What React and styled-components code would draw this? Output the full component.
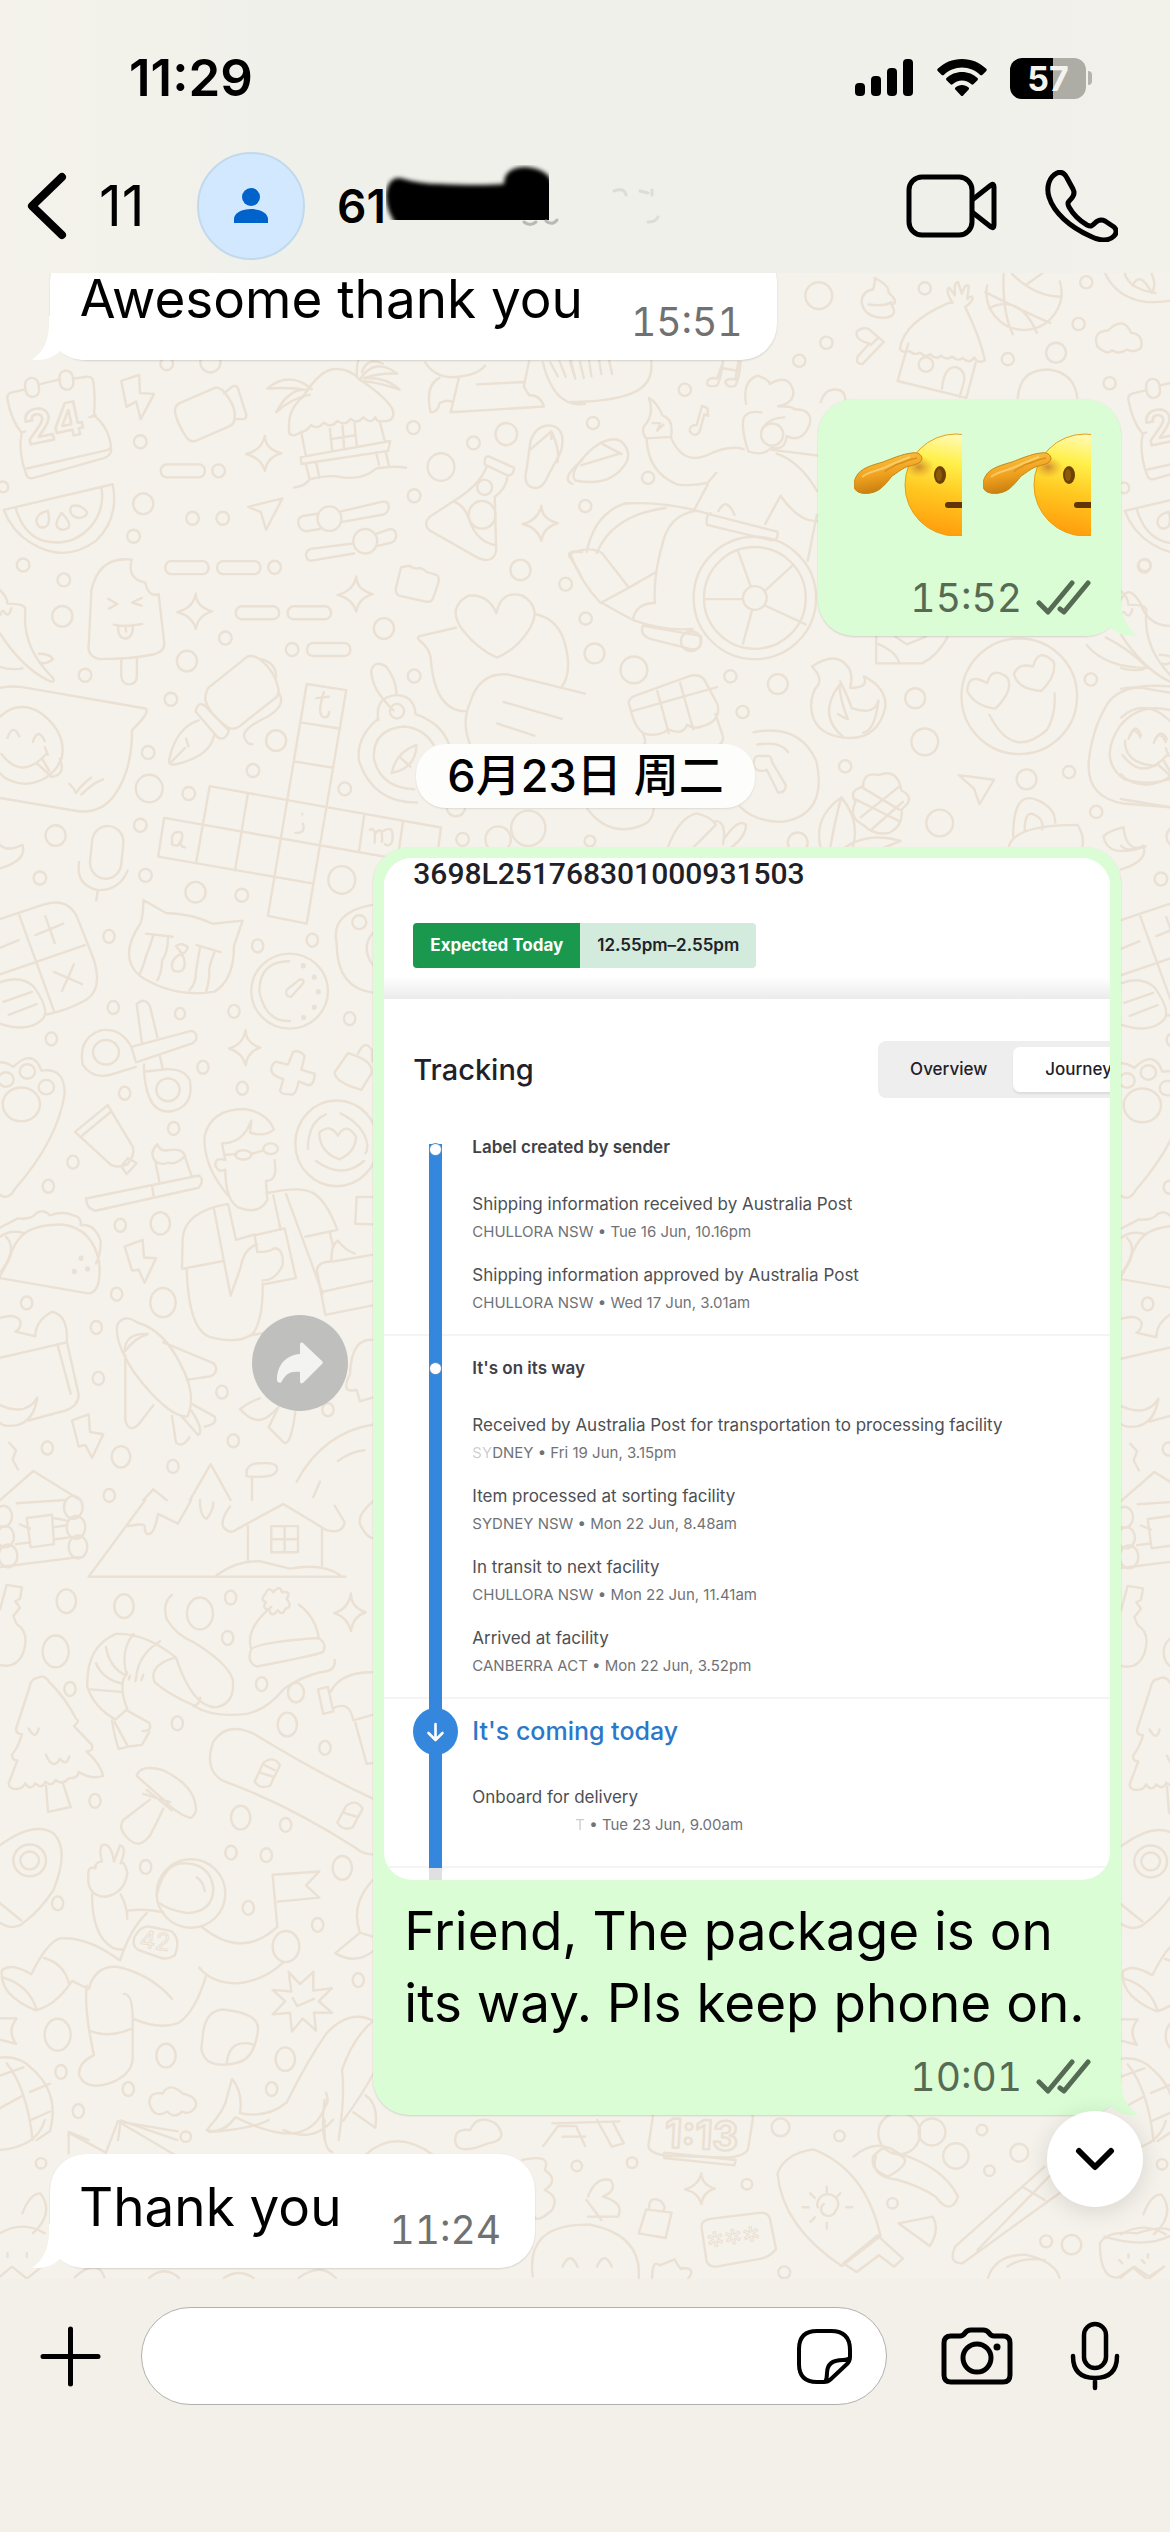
import React, { useId } from "react";
import styled, { createGlobalStyle } from "styled-components";

const GlobalStyle = createGlobalStyle`
  * {
    box-sizing: border-box;
  }

  body {
    margin: 0;
    background: #f2f0e9;
    color: #000;
    font-family: Inter, "Noto Sans CJK SC", sans-serif;
  }

  button {
    border: 0;
    padding: 0;
    background: none;
    color: inherit;
    font: inherit;
    cursor: pointer;
  }

  svg {
    display: block;
    flex: none;
  }
`;

const Page = styled.div`
  display: flex;
  flex-direction: column;
  min-height: 100vh;
`;

/* ---------- header ---------- */

const Header = styled.header`
  display: flex;
  flex-direction: column;
  gap: 44px;
  padding: 48px 0 13px;
  background: linear-gradient(90deg, #f4f2eb 0%, #eff0ea 30%, #eff0ea 70%, #f2f1ea 100%);
`;

const StatusBar = styled.div`
  display: flex;
  align-items: center;
  justify-content: space-between;
  height: 60px;
  padding: 0 78px 0 129px;
`;

const Clock = styled.div`
  font-size: 51px;
  line-height: 60px;
  font-weight: 600;
`;

const StatusIcons = styled.div`
  display: flex;
  align-items: center;
  gap: 23px;
`;

const Battery = styled.div`
  display: flex;
  align-items: center;
  gap: 2px;
`;

const BatteryBody = styled.div`
  width: 76px;
  height: 41px;
  border-radius: 12px;
  background: linear-gradient(90deg, #000 57%, #adada6 57%);
  color: #f4f3ee;
  font-size: 34px;
  line-height: 41px;
  font-weight: 700;
  text-align: center;
`;

const BatteryCap = styled.div`
  width: 4px;
  height: 14px;
  border-radius: 0 4px 4px 0;
  background: #b4b4ad;
`;

const NavBar = styled.nav`
  display: flex;
  align-items: center;
  height: 108px;
  padding: 0 52px 0 26px;
`;

const BackButton = styled.button`
  display: flex;
  align-items: center;
  gap: 31px;
  width: 171px;
  font-size: 56px;
  line-height: 64px;
`;

const Avatar = styled.div`
  display: flex;
  align-items: center;
  justify-content: center;
  width: 108px;
  height: 108px;
  border: 2px solid #c2d9ec;
  border-radius: 50%;
  background: #d1e8ff;
`;

const Contact = styled.div`
  display: flex;
  align-items: center;
  flex: 1;
  margin-left: 32px;
  font-size: 46px;
  line-height: 56px;
  font-weight: 600;
`;

const NavActions = styled.div`
  display: flex;
  align-items: center;
  gap: 48px;
`;

/* ---------- conversation ---------- */

const Chat = styled.main`
  position: relative;
  flex: 1;
  overflow: hidden;
  background: #f5f2eb;
`;

const Wallpaper = styled.svg`
  position: absolute;
  top: 0;
  left: 0;
  width: 100%;
  height: 100%;
  fill: none;
  stroke: #eae0d3;
  stroke-width: 2.4;
  stroke-linecap: round;
  stroke-linejoin: round;

  path,
  circle,
  ellipse,
  rect {
    vector-effect: non-scaling-stroke;
  }
`;

const Messages = styled.div`
  position: relative;
  display: flex;
  flex-direction: column;
  gap: 39px;
  margin-top: -27px;
  padding: 0 49px 10px 50px;
`;

const Row = styled.div`
  display: flex;
  justify-content: ${(props) => (props.$mine ? "flex-end" : "flex-start")};
  gap: 25px;
`;

const Bubble = styled.div`
  position: relative;
  border-radius: 36px;
  background: ${(props) => (props.$mine ? "#dafdd5" : "#fff")};
  box-shadow: 0 1px 2px rgba(0, 0, 0, 0.14);
`;

const TextBubble = styled(Bubble)`
  display: flex;
  align-items: flex-end;
  gap: 48px;
  padding: 17px 34px 14px 29px;
`;

const EmojiBubble = styled(Bubble)`
  padding: 34px 30px 14px 36px;
`;

const MediaBubble = styled(Bubble)`
  width: calc(70% - 2px);
  padding: 11px;
`;

const Tail = styled.svg`
  position: absolute;
  bottom: 0;
  ${(props) => (props.$mine ? "right: -17px;" : "left: -18px; transform: scaleX(-1);")}
`;

const Text = styled.p`
  margin: 0;
  font-size: 53px;
  line-height: 72px;
`;

const ShortText = styled(Text)`
  padding-bottom: 11px;
`;

const Caption = styled.div`
  padding: 15px 0 3px 20px;
`;

const Meta = styled.div`
  display: flex;
  align-items: center;
  justify-content: flex-end;
  gap: 14px;
  color: ${(props) => (props.$mine ? "#566b53" : "#717171")};
  font-size: 39px;
  line-height: 48px;
  font-variant-numeric: tabular-nums;
`;

const CaptionMeta = styled(Meta)`
  margin-top: 14px;
  padding-right: 19px;
`;

const Emojis = styled.div`
  display: flex;
  gap: 21px;
  margin-bottom: 38px;
`;

const DatePill = styled.div`
  align-self: center;
  margin-top: 69px;
  padding: 0 31px;
  border-radius: 30px;
  background: #fdfdfc;
  box-shadow: 0 1px 2px rgba(0, 0, 0, 0.1);
  font-size: 45px;
  line-height: 64px;
  font-weight: 500;
`;

const ForwardButton = styled.button`
  display: flex;
  align-items: center;
  justify-content: center;
  align-self: center;
  flex: none;
  width: 96px;
  height: 96px;
  margin-bottom: 236px;
  border-radius: 50%;
  background: #bfbfbe;
`;

const ScrollButton = styled.button`
  position: absolute;
  right: 27px;
  bottom: 72px;
  display: flex;
  align-items: center;
  justify-content: center;
  width: 96px;
  height: 96px;
  border-radius: 50%;
  background: #fff;
  box-shadow: 0 4px 24px rgba(0, 0, 0, 0.12);
`;

/* ---------- parcel tracking card ---------- */

const Card = styled.section`
  height: 1022px;
  overflow: hidden;
  border-radius: 28px;
  background: #fff;
  color: #1f2128;
`;

const CardTop = styled.div`
  display: flex;
  flex-direction: column;
  gap: 33px;
  height: 141px;
  padding-left: 29px;
  background: linear-gradient(#fff 84%, #ebebec 100%);
`;

const ParcelNumber = styled.div`
  font-family: Roboto, sans-serif;
  font-size: 30px;
  line-height: 32px;
  font-weight: 500;
`;

const Estimate = styled.div`
  display: flex;
  font-size: 17px;
  line-height: 45px;
`;

const EstimateLabel = styled.div`
  padding: 0 17px;
  border-radius: 4px 0 0 4px;
  background: #1a984e;
  color: #fff;
  font-weight: 700;
`;

const EstimateTime = styled.div`
  padding: 0 17px;
  border-radius: 0 4px 4px 0;
  background: #d2ebdd;
  font-weight: 600;
`;

const CardHead = styled.div`
  display: flex;
  align-items: center;
  justify-content: space-between;
  padding: 42px 0 37px 29px;
`;

const CardTitle = styled.h2`
  margin: 0;
  font-size: 29px;
  line-height: 36px;
  font-weight: 500;
`;

const Tabs = styled.div`
  display: flex;
  flex: none;
  margin-right: -40px;
  padding: 6px;
  border-radius: 8px;
  background: #eee;
`;

const Tab = styled.button`
  height: 45px;
  padding: 0 26px;
  border-radius: 7px;
  background: ${(props) => (props.$selected ? "#fff" : "none")};
  box-shadow: ${(props) => (props.$selected ? "0 2px 2px rgba(0, 0, 0, 0.08)" : "none")};
  font-size: 17px;
  line-height: 45px;
  font-weight: 500;
`;

const SelectedTab = styled(Tab)`
  padding: 0 32px;
`;

const Journey = styled.ol`
  margin: 0;
  padding: 0;
  list-style: none;
`;

const Stage = styled.li`
  display: flex;
  border-bottom: 2px solid #f4f4f5;
`;

const Rail = styled.div`
  display: flex;
  justify-content: center;
  align-items: flex-start;
  flex: none;
  width: 45px;
  margin: ${(props) => (props.$first ? "9px" : "0")} 14px -2px 29px;
  padding-top: ${(props) => props.$top}px;
  background: linear-gradient(#3487dc, #3487dc) center / 13px 100% no-repeat;
`;

const Dot = styled.div`
  width: 11px;
  height: 11px;
  border-radius: 50%;
  background: #fff;
  box-shadow: 0 0 0 1px #5b93c9;
`;

const ArrowDot = styled.div`
  display: flex;
  align-items: center;
  justify-content: center;
  width: 45px;
  height: 47px;
  border-radius: 50%;
  background: #3487dc;
`;

const StageBody = styled.div`
  padding-top: ${(props) => props.$top}px;
  padding-bottom: ${(props) => (props.$current ? "29px" : "19px")};
`;

const StageTitle = styled.h3`
  margin: 0 0 ${(props) => (props.$current ? "38px" : "33px")};
  color: ${(props) => (props.$current ? "#2a78ca" : "#3f4146")};
  font-size: ${(props) => (props.$current ? "25px" : "17px")};
  line-height: ${(props) => (props.$current ? "32px" : "24px")};
  font-weight: ${(props) => (props.$current ? 500 : 600)};
`;

const Scan = styled.div`
  color: #4d4f53;
  font-size: 17px;
  line-height: 24px;

  & + & {
    margin-top: 19px;
  }
`;

const ScanPlace = styled.div`
  margin-top: 4px;
  color: #707276;
  font-size: 15px;
  line-height: 24px;
`;

const Faded = styled.span`
  opacity: 0.35;
`;

const Blank = styled.span`
  display: inline-block;
  width: 103px;
`;

const RailEnd = styled.div`
  width: 13px;
  height: 16px;
  margin-left: 45px;
  background: #e0e0e2;
`;

/* ---------- composer ---------- */

const Composer = styled.footer`
  display: flex;
  align-items: flex-start;
  height: 253px;
  padding: 28px 50px 0 40px;
  background: #f2f0e9;
`;

const ComposerButton = styled.button`
  display: flex;
  align-items: center;
  flex: none;
  height: 98px;
  margin-right: ${(props) => props.$gap || 0}px;
`;

const Field = styled.div`
  display: flex;
  align-items: center;
  flex: 1;
  min-width: 0;
  height: 98px;
  margin-right: 54px;
  padding: 0 34px;
  border: 1px solid #b1b0ac;
  border-radius: 49px;
  background: #fff;
`;

const Input = styled.input`
  flex: 1;
  min-width: 0;
  border: 0;
  outline: 0;
  background: none;
  font-family: inherit;
  font-size: 50px;
`;

const stages = [
  {
    title: "Label created by sender",
    top: 0,
    railTop: 0,
    scans: [
      { what: "Shipping information received by Australia Post", where: "CHULLORA NSW • Tue 16 Jun, 10.16pm" },
      { what: "Shipping information approved by Australia Post", where: "CHULLORA NSW • Wed 17 Jun, 3.01am" },
    ],
  },
  {
    title: "It's on its way",
    top: 20,
    railTop: 27,
    scans: [
      { what: "Received by Australia Post for transportation to processing facility", faded: "SY", where: "DNEY • Fri 19 Jun, 3.15pm" },
      { what: "Item processed at sorting facility", where: "SYDNEY NSW • Mon 22 Jun, 8.48am" },
      { what: "In transit to next facility", where: "CHULLORA NSW • Mon 22 Jun, 11.41am" },
      { what: "Arrived at facility", where: "CANBERRA ACT • Mon 22 Jun, 3.52pm" },
    ],
  },
  {
    title: "It's coming today",
    top: 16,
    railTop: 9,
    current: true,
    scans: [{ what: "Onboard for delivery", blank: true, faded: "T", where: " • Tue 23 Jun, 9.00am" }],
  },
];

const Dots = ({ items }) => items.map(([x, y, r]) => <circle key={`${x}-${y}`} cx={x} cy={y} r={r} />);

const Sparkle = ({ x, y }) => (
  <path d={`M${x + 5} ${y - 46}q0 34 44 46q-38 10-44 46q-10-34-50-44q42-10 50-48z`} />
);

const CalendarDay = () => (
  <text x="28" y="172" fontSize="46" fontWeight="700" fontFamily="Inter, sans-serif" transform="rotate(-12 28 172)">24</text>
);

const DoodleLabels = () => (
  <g fontFamily="Inter, sans-serif">
    <text x="139" y="1674" fontSize="24" strokeWidth="1" transform="rotate(8 139 1674)">42</text>
    <text x="664" y="1874" fontSize="40" fontWeight="700" transform="rotate(3 664 1874)">1:13</text>
    <text x="709" y="1986" fontSize="36" strokeWidth="1" transform="rotate(-8 709 1986)">***</text>
  </g>
);

// everything in one tile of the wallpaper, which repeats sideways
const Doodles = () => (
  <>
    <g transform="translate(0 57) scale(0.3731 0.3827)">
      <path d="M67 155l-35 8q-15 4-12 18q10 55 38 88q-10 50 12 108q4 12 18 10l190-52q20-6 20-24q-4-55-46-88q4-50-2-88q-2-14-18-13l-34 5M105 142l55-13M58 268l10-3M240 228l16-5M72 362l215-48q12-4 10-16" />
      <rect x="68" y="125" width="36" height="50" rx="18" transform="rotate(-8 86 150)" />
      <rect x="160" y="106" width="36" height="50" rx="18" transform="rotate(-8 178 131)" />
      <path d="M10 470L302 403q18 90-45 148q-85 60-175 5q-50-30-72-86zM42 465q20 68 72 85q75 20 128-35q40-45 30-103" />
      <path d="M128 472q-34 10-30 30q4 16 20 14q20-6 10-44zM165 478q-18 24-12 36q8 12 24 6q22-8-12-42zM192 460q-8 14 2 24q16 12 30 4q20-10-4-24q-10-8-28-4z" />
      <path d="M325 133l48-16l2 48l38 2l-36 66l-12-46l-26 14zM472 225q-10-28 14-36l90-38q12-2 22 8q38 42 30 75q0 12-14 18l-90 38q-16 4-26-12q-20-30-26-53zM600 165l24-18q10-4 14 6l22 68q2 10-8 12l-22 0" />
      <rect x="431" y="351" width="118" height="34" rx="16" />
      <rect x="443" y="604" width="116" height="34" rx="16" />
      <rect x="582" y="604" width="116" height="34" rx="16" />
      <rect x="632" y="722" width="116" height="34" rx="16" />
      <rect x="771" y="722" width="116" height="34" rx="16" />
      <rect x="823" y="818" width="116" height="34" rx="16" />
      <path d="M776 272q-10-60 36-98q50-76 90-72q36 0 60 26q86 56 92 86q4 24-26 24q-18 4-22-10q-12 20-32 0q-16 20-34 4q-14 20-36 6q-16 20-36 4q-18 20-34 6q-14 18-26 18q-20 14-32 6zM806 332l240-42l-6 26l-232 34zM808 270l12 60M1018 240l14 52M884 258l6 54M950 244l6 56M886 285l66-10M918 250l4 56M820 352l10 38M848 348l8 38M1008 320l8 32M1034 318l8 36M788 412q30-4 42-22q60-14 92-4q54 4 86-24q44-8 80-2" />
      <path d="M836 155q-60-50-120-2q60-4 110 4q-50-8-86 58q36-34 90-46M965 128q40-58 100-14q-50-2-90 12q60-4 96 30q-50-18-96-22M956 120q0-60 20-48M970 110q14-40 56-22" />
      <path d="M665 462l92-22l-44 82l-14-46z" />
      <path d="M850 480l-38 6q-16 6-12 22q6 18 22 18l35-6M914 474l114-26q14 0 14 14q0 14-14 20l-114 20M945 558l-112 14q-16 6-12 20q4 14 18 10l110-18M1010 532l36-12q14 0 16 16q0 14-14 20l-36 8" />
      <circle cx="883" cy="493" r="32" />
      <circle cx="979" cy="552" r="32" />
      <path d="M1310 330q-14 0-10 22l60 28q18 0 18-20zM1304 358q-20 50-90 90l-62 40q-20 18 0 36l130 72q40 16 48-20l-4-140q30-20 34-52M1215 448q30 10 42 46q20 60 72 68" />
      <circle cx="1299" cy="411" r="20" />
      <circle cx="1292" cy="483" r="36" />
      <path d="M1422 290q16-44 56-40q40 8 26 66q-10 20-36 66q-16 40-46 28q-20-10-10-50zM1418 315l60-50q24 50 16 80M1478 265l0 20" />
      <path d="M1560 340q-60 50-26 62M1560 580q-50-6-28 20q20 30 28 50" />
      <path d="M1075 620l22-4q12 10 30 6q14 6 16 10l26 8q10 4 6 20l-14 40q-4 12-18 10l-74-16q-10-6-8-20z" />
      <path d="M245 680q20-90 108-80q-14 50 36 60q10 40 36 30l15 126q4 24-30 32q-60 12-144 12q-34-8-28-40zM325 862l0 44q4 20 20 20q22 0 22-24l0-42M290 702l24 14l-22 12M380 700l-26 12l26 8M305 770q30 8 76-2M316 772q0 36 22 34q20-4 18-36M336 772l2 16" />
      <path d="M0 680q20 18 20 35q50 0 48 16q-10 100 74 178q8 16-14 6q-70-34-128-122M0 745q8-20 14-4q12 8 16-14M104 846q30 0 38 14q-20 16-36 8M0 880q26 10 60 4" />
      <path d="M0 935q30-6 60-2l330 56q14 10-36 56q0 110-50 174q-40 50-110 36l-194-32" />
      <path d="M0 1010q50-44 108-10q70 50 58 116q-24 64-98 70q-50-4-68-28M20 1066q14-40 32-4M88 1076q14-40 32-2M4 1108q54 70 120 0M120 1090l8 20M98 1132q24 20 40 36q40-6 22-48M114 1122l18 30M186 1186q12 10 18 24q12-20 40-40M218 1214q30-30 58-40" />
      <path d="M550 966q0-30 20-40l92-72q14-6 34 6q40 30 50 76q4 20-14 30l-88 68q-18 14-34 4q-50-34-60-72zM552 985q-20-20-28 12l60 68q20 10 30-18zM532 1020q-60 20-78 100q-6 20 20 14q90-20 100-76M460 1128l36-36M505 1088l-6-20M700 860q40 10 40 46M748 950q20 30-30 60q-80 36-60 60q6 14 18 12" />
      <path d="M822 925l106 16l-106 610l-104-20zM810 1026l102 16M792 1128l100 16M562 1192l620 108l-14 100M440 1275l730 125M424 1376l412 70M562 1192l-36 198M664 1214l-34 198M976 1268l-14 96M1080 1285l-14 96M440 1275l-16 100" />
      <path d="M848 962l34-4M868 946q-20 60 0 66q14 0 14-14M810 1264l0 2M812 1290q8 26-20 24M462 1340q-6-30 20-28q16 6-6 36q-20-2-14-8zM488 1330q-10 20 8 22M992 1306q16-10 12 34M1006 1316q20-26 18 22M1026 1310q30-20 26 22q-4 20-20 12" />
      <path d="M995 890q10-30 40-10q26 30 28 72M995 890q0 50 60 104M1014 1020q-10-60 46-66q50 0 54 50q70 24 90 80" />
      <circle cx="1064" cy="996" r="19" />
      <path d="M1118 1235q-120 0-156-110q-8-60 52-110M1110 1200q-90-4-108-80q-4-76 80-84q54 4 80 48M1050 1158q10-54 66-74q0 60-66 74zM1070 1115l30 26" />
      <path d="M1330 740q-20-50-74-46q-60 30-16 90q40 50 92 72q50-20 84-70q40-60-16-92q-56-16-70 46zM1222 778l-98 22q-10 4 4 14q20 16 26 40q10 140 92 142M1432 742q60 10 80 70q24 80-6 120M1260 1084q-24-60 0-110q24-80 100-74l208 50M1350 972l156 44M1332 1028l100 32" />
      <rect x="244" y="1296" width="84" height="138" rx="42" transform="rotate(6 286 1365)" />
      <path d="M212 1390q-10 60 50 74q60 0 80-52M262 1465l-4 26M0 1345q20 20 60 0q14 40-60 62" />
      <path d="M1140 85q26 40 80 38q60-4 80-30M1178 125q-40 20-24 90q20 0 24-24q20-10 32-4M1230 125l-22 90l250-15q-10-30-40-30l-14-22l14-66M1278 142l126-6M1455 85q30 120 113 108M1475 85l20 36M1500 82l16 40M1530 80l10 40" />
      <Sparkle x={705} y={322} />
      <Sparkle x={520} y={735} />
      <Sparkle x={950} y={690} />
      <Sparkle x={1446} y={505} />
      <Dots items={[[376, 292, 17], [586, 368, 17], [516, 492, 17], [597, 492, 17], [384, 454, 27], [358, 539, 17], [62, 614, 17], [171, 653, 17], [736, 620, 17], [167, 748, 27], [228, 902, 17], [604, 805, 17], [501, 865, 27], [783, 835, 17], [458, 965, 17], [740, 1073, 27], [678, 1151, 17], [397, 1104, 17], [400, 1198, 36], [506, 1211, 17], [924, 1199, 17], [376, 1294, 17], [149, 1321, 27], [107, 1432, 17], [390, 1425, 17], [524, 1469, 27], [648, 1477, 17], [916, 1437, 36], [1029, 780, 27], [1110, 904, 17], [1110, 433, 17], [1182, 358, 36], [1108, 255, 17], [1269, 295, 17], [1357, 272, 29], [1395, 627, 27], [1516, 664, 17], [1240, 1331, 17], [1335, 1331, 34], [1416, 1302, 46], [447, 88, 17], [564, 84, 27], [1222, 1246, 25], [8, 410, 14]]} />
    </g>

    <g transform="translate(570 -3) scale(0.3827)">
      <path d="M0 345q100 0 160-22q60-24 52-85M0 240l14 44M26 240l10 42M50 238l6 40M76 236l6 36M102 236l8 36" />
      <path d="M400 240l-16 44q-20-6-26 10q0 14 26 8q8-10 16-62M440 240l-8 46q-24-4-26 8q6 16 26 8q10-16 14-62M396 256l44 8M345 355l-14 50q-20 0-18 16q14 20 26 0l12-44l10 4l-2-20z" />
      <path d="M1090 40a98 98 0 1 0 190-10M1085 58q120 60 170 80M1133 8q-4 100 24 160M1095 100q80-40 125 64M1155 10q60 60 130 60M1190 40l45-32" />
      <path d="M762 85q0-30 30-34q6-20 4-30q40 20 36 38q30 26 8 32q20 30-20 34q-50 0-58-40zM780 90q40 6 60-6" />
      <path d="M1000 86q-20-30-10-40l16 20q-4-34 8-34l10 30q10-30 18-20l-4 34q14-14 14 0q-10 16-20 20q40 80 52 140q-20 10-28-8q-10 20-30 2q-12 10-28-4q-14 12-28-2q-14 12-28-4q-16 10-26-4q-18 8-28-4q-20 6-26-6q10-70 128-120zM884 192l-28 98l180 44l24-92M972 310q6-60 38-56q24 10 20 36l-12 42" />
      <circle cx="930" cy="247" r="19" />
      <path d="M750 160q14-12 30-6l40 34l-56 58q-20 0-12-20l30-34q-40-10-32-32zM786 196l20-20M1398 8q30 66 110 76q40 0 60-4M1450 10q10 40 80 50M1470 40q20-40 50 20M1520 10q14 30 0 50M1378 200q-14-40 28-42q40-40 60 6q34 4 26 40q-20 14-36 4q-20 14-40 2q-10 14-38-10zM1170 336q4-76 80-76q70 8 76 78M655 345q10-30 30-32q40-6 34 40" />
      <path d="M192 410q30-30 14-76q20 10 36 46q30 10 22 56l-64 4q-12-10-8-30zM216 400l20 0l-8 20l16-16M200 440q4 90 80 120q40 6 80-4l22-26M264 438q30 70 90 48q60-30 100-18M360 560l-34 64M540 480q60 20 106 98M550 590l-40 74M550 590q50 70 96 66M645 640l-24 120" />
      <path d="M460 350q-10-60 30-74q30 10 32 22q50-30 62 20q0 30-40 38q40 0 42 8q50 0 40 40q-20 50-60 30q-4 40-40 30q-20 24-60 10q-20-60-12-88q10-20 46-14M560 385q-40 0-58 30M528 470l130 16" />
      <circle cx="528" cy="430" r="29" />
      <path d="M14 550q-20-20 40-80q50-40 80-22q30 30 10 60q-40 60-130 42zM30 510l100-30M85 455l50 26" />
      <path d="M44 736q20-100 100-126q110-6 220 28M70 740q40-100 180-118M4 740q50-20 80 0l70 90l-74 40q-50-50-80-130M154 830l70-40M84 870q60 34 80 44M246 700q20-60 80-70M246 700q-30 100-24 170q-50 0-58 44q80 30 156 24M190 930q-8 24 20 34l88 22q50 20 44-30l-150-26M362 638l180 46q4 24-18 22l-166-40q-4-26 10-30M388 630q20-40 42 10" />
      <circle cx="483" cy="857" r="160" />
      <circle cx="483" cy="857" r="133" />
      <circle cx="483" cy="857" r="31" />
      <path d="M472 826l-34-94M510 838l74-68M508 876l108 50M476 888l-24 88M452 860l-100 0" />
      <circle cx="316" cy="970" r="26" />
      <path d="M156 1140q-10-20 20-30l140-50q30-6 40 20l30 56q8 44-40 56q-20 10-40-4q-10 30-50 12q-20 20-60 12q-26-10-40-72zM164 1152l220-62M228 1100l30 110M288 1080l34 120M190 1210q10 20 4 30M380 1160l20 60q0 20-20 24" />
      <path d="M632 1036q60-40 90-4q20 20 10 60q50 0 36-30q60 30 56 80q-20 90-110 80q-80-10-84-80q0-40 20-60q8-20-18-46zM706 1075q20 40 30 70q60 20 70-20q-10 80-40 84M700 1160q16 10 26 14q-20-50-22-90q-60 80 12 138" />
      <circle cx="1174" cy="1114" r="151" />
      <path d="M1090 1080q-50-30-52 20q20 40 74 46q50-50 30-82q-40-30-52 16zM1210 1036q-40-10-50 20q10 40 72 44q40-40 32-76q-40-40-54 12zM1096 1162q60 120 150 40q24-40 20-96" />
      <path d="M800 958l0 70l120 0q40-20 66-68M800 975q50 20 60 50M850 958l30 20l50-20M1350 980q50 60 160 60M1400 960q60 30 110 80M1440 860q20-40 50 10q20 60 78 60" />
      <path d="M480 1208q120-24 164 76q30 140-90 158q-70 0-110-40M490 1240q60-10 80 20M480 1290q0-24 20-20l18 0q8 0 10 16l36 60q0 20-20 20l-30-60q-30 10-34-16zM1016 1320l92 12l-38 64l-14-40z" />
      <path d="M655 1510q-20-80 54-132q50 60 30 130M680 1510q10-60 28-130M746 1390q-20-30 20-40q0-40 40-30q50-20 60 40q40 20 0 50q6 40-30 60q-40 10-70-20q-40-20-20-60zM740 1380l120 60M760 1350l100 60M760 1430l100-80M790 1460l80-70M720 1508q60-40 144-16l-50 20M255 1510q30-80 76-90q40 10 50 30q-40 40-60 60M380 1440q30 0 20 60M400 1490q40-60 60-40q0 30-40 60M45 1408q60 80 150 40q20-10 24-40" />
      <path d="M1158 1480q0-120 60-96q50 20 50 60M1188 1466q0-60 30-40q20 10 16 36M1146 1510q10-60 180-60q20 30 12 60M1394 1480q10 60 110 26q-50 20-58-50q-40 10-52 24z" />
      <path d="M1568 1088q-120-10-160 40q-40 60-52 150q-10 100 90 116l122 10M1568 1150q-80-20-130 40q-60 90 10 140q60 20 120 0M1450 1230q0 60 80 66M1464 1216q14-36 28 0M1530 1226q14-30 30 0" />
      <Dots items={[[300, 313, 16], [60, 400, 16], [204, 543, 16], [40, 617, 16], [41, 911, 16], [64, 1002, 26], [167, 1045, 35], [419, 1062, 16], [543, 1082, 26], [451, 1155, 16], [902, 1119, 26], [927, 1233, 35], [719, 1297, 16], [966, 1445, 35], [1193, 1331, 26], [1304, 1312, 16], [1375, 1416, 16], [1361, 1070, 16], [1502, 771, 16], [1410, 296, 16], [1144, 233, 16], [1270, 216, 26], [1329, 141, 16], [1349, 32, 16], [927, 48, 16], [650, 67, 35], [670, 190, 16], [599, 237, 16], [52, 1492, 14], [595, 1496, 26]]} />
    </g>

    <g transform="translate(0 627) scale(0.3333 0.3827)">
      <path d="M0 50l130-38q70-20 100 30l50 110q30 80-20 108q-60 30-126 40M0 194l255-76M58 40l104 250M0 125l56-20M106 92l84-30M136 42l28 70M162 188l84 32M222 168l-36 70M0 215q60-20 100 10q50 60 30 84q-40 40-130 14M10 266l86-26M26 300l84-28" />
      <path d="M430 0q0 40-8 60q-70 90 0 140q100 56 220 40q60-30 60-120l26-66l-90 8q-60-26-140-28l-68-34M438 88l80 8M590 118l72 18M460 92q-10 30-20 50q-8 26-20 50M504 98q0 40-18 60q0 30-14 52M600 124q-10 50-12 64q0 30-20 48M644 136q-20 40-16 60q-4 30-10 44M528 120q20-10 36 4q-10 20-20 14zM544 140q-40 20-24 44q30 10 34-14q0-20-10-30" />
      <ellipse cx="869" cy="238" rx="115" ry="98" />
      <path d="M868 160q-90 0-90 80q20 80 92 76M860 235l40-28q16 0 8 12l-34 34q-20 0-14-18zM1120 12q-130 20-110 100q0 120 110 130M1120 85q-40 40 0 86" />
      <ellipse cx="1078" cy="58" rx="21" ry="18" />
      <path d="M410 272q26-20 40 6l22 80M410 272l16 102M394 384l180-42q20 4 14 24q-10 10-16 10l-164 48zM394 384q-30-50-90-44q-70 20-56 90q30 40 86 26l74-20M432 430l0 20q10 110 80 102q70-10 58-80q-16-30-66-30l-68 6M480 408l8 32" />
      <ellipse cx="318" cy="398" rx="39" ry="32" />
      <ellipse cx="504" cy="496" rx="35" ry="30" />
      <path d="M0 424q20 0 40 12q60-50 84 10q70-10 70 60q-20 120-150 250q-20 30-44 14" />
      <ellipse cx="82" cy="448" rx="23" ry="19" />
      <ellipse cx="18" cy="469" rx="23" ry="19" />
      <ellipse cx="139" cy="489" rx="23" ry="19" />
      <ellipse cx="64" cy="534" rx="56" ry="44" />
      <path d="M225 606l98-70l76 110q6 20-16 44q-30 12-50 2zM246 616l86-62M364 696l20-22l26 14l-30 28zM258 780l340-60q16 12-2 32l-310 60q-26-4-28-32zM456 746l6 32M478 736l-12-54q-20-20 6-44q10 20 30 16q50-8 54 20l20 50M468 684q20 10 36 2q24 8 52-18" />
      <path d="M688 776q-80-80-74-160q20-70 120-70q70 10 88 54q-30 20-72 8l4-32q-24 60-88 60l10 44q-30-10-30 14q10 20 30 10q0 80 40 100q60 20 86-20l-4-50q30 0 28-34l-2-20M674 666l36-2M754 664l36-10" />
      <ellipse cx="730" cy="666" rx="24" ry="12" />
      <ellipse cx="812" cy="650" rx="22" ry="14" />
      <path d="M684 794q-130 20-136 90l-2 80l120-20M642 808l50 226l30-74q10-50 50-60M560 964q6 160 70 178q90 20 130-10q30-40 28-130M684 794l24 94l56-14M820 772l22 90M800 766q100-20 140 0q40 20 72 96l-96 18M858 768l110 260M764 876l90-18l34 130l-96 16M764 876l8 44q40 0 50-10q30 0 26 44q-20 40-60 40M750 1138l50-8" />
      <ellipse cx="1010" cy="636" rx="124" ry="112" />
      <path d="M1014 616q-24-34-56-8q0 50 60 70q50-20 50-60q-30-40-54-2zM924 650q0-70 54-90M1022 558q70 30 80 80q0 20-6 24M948 682q80 50 144 0M1124 776l-54 0l-4 70l58 2M1124 926l-120 18q-60 0-52 30l24 110l150-26M966 1024l158-30M994 940q0-40 20-50q20 24 50 34M990 870l10 36" />
      <path d="M0 856l54-24q40 4 56-14q20-12 40 6q40-12 70 0q26 4 22 26q40-6 60 40q0 40-14 60M0 988l264 40q40 0 34-80q-20-90-110-100q-80 0-116 24q-30 20-46 70l-26 40M0 880q30-20 70-10M4 970q50-60 14-90" />
      <path d="M374 906l54-18l4 46l36 2l-34 64l-18-34l-20 2z M216 1360l50-16l4 46l40 6l-34 62l-20-34l-20 4z" />
      <path d="M352 1110q20-30 60-6q80 20 130 110q50 80 20 136q-60 0-160-116q-60-80-50-124zM374 1180q0-50 70-46q-40 10-70 46M490 1156l150 54q20 20-6 34l-74 10M376 1190l0 170q10 34 40 10l44-50M516 1348l12 70q20 14 40-14M544 1348l50 50q20-10-20-64M574 1316l70 34q10 20-30 26" />
      <path d="M0 1092q50-14 62 10q0 20-16 26l60 12q0-40 50-64q50 10 44 80l-200 40M172 1160l40 130M200 1152l36 140q0 30-40 42l-110 26M0 1320q80 30 112-20q-10 60-60 72q-40 6-52-6" />
      <path d="M28 1418l20 20l-10 24l16 26M0 1568l100-76l140 76M570 1568l62-94l60 94M460 1540l-30 28M460 1540l40 28M740 1490q10-20 40-18q60-4 50 20q-10 20-90 14zM756 1510l0 58M890 1520q80-130 235-150M940 1560l20-40M1014 1466q40-26 80-28M720 1330q30-20 60-28M720 1330q40 40 76 24q20-10 40-30l-30 54l46 40q20 10 34-80M1124 1150q-70-10-74 90q-30 50 20 40l10 30l46-12" />
      <path d="M880 396q20-4 34 12l-10 36l40 10q0 30-20 30l-28-10q-10 40-24 34q-30 0-32-10l10-30q-40-10-36-30q10-20 20-14l30 6zM1004 450l40-50q80 20 70 54l-30 42q-80-20-80-46zM1074 402q20-40 42-10l0 30" />
      <Sparkle x={732} y={386} />
      <Dots items={[[327, 95, 17], [773, 120, 17], [937, 105, 17], [340, 281, 17], [540, 297, 15], [702, 291, 17], [1049, 310, 17], [154, 363, 17], [609, 437, 17], [727, 492, 17], [374, 505, 17], [521, 597, 17], [219, 685, 17], [145, 748, 17], [361, 850, 17], [481, 845, 29], [350, 1030, 17], [489, 1052, 38], [80, 1053, 17], [289, 1117, 17], [295, 1250, 17], [666, 1286, 17], [142, 1432, 17], [363, 1455, 28], [519, 1480, 17], [700, 1413, 17], [984, 1332, 17], [328, 1556, 17], [243, 936, 4], [223, 971, 4], [263, 964, 4], [910, 172, 4], [943, 202, 4], [955, 240, 4], [943, 280, 4], [911, 307, 4]]} />
    </g>

    <g transform="translate(0 1227) scale(0.3333 0.4082)">
      <path d="M80 44l76-8l6 72l-70 8zM50 8l146-8M60 60l30 10M48 108l40-4M160 44l38 6M164 66l38-4M166 96l40-4M0 164l236-24" />
      <Dots items={[[220, 18, 28], [228, 67, 28], [234, 115, 28], [10, 40, 26], [16, 90, 26], [24, 137, 28]]} />
      <path d="M436 0L266 188l770 0M384 64q50-8 50 0q0 20 10 20q20 0 30-50l60 24l40-58M600 0q0 40 20 46q20-20 20-40M690 16q-30 34-20 50q20 20 40 6l140-62l130 64q50 10 54-20l-30-40M744 64l0 84M966 70l0 90M650 184q60-36 130-34l90 18q100-14 150 16M814 64l80 0l0 64l-80 0zM854 64l0 64M814 96l80 0M1124 0q-60 40-40 66q20 30 40 28" />
      <path d="M20 208l46 6l-6 28l-14 6l14 16l-20 20l10 20q40 20 20 70q-20 40-70 30M20 208l-20 60M516 232q-30 20-16 60q30 40 80 56q100 50 118 90q10 60-50 70q-70 0-120-122q-90-60-180-58q-90 30-86 130q20 50 84 80l36-26q-30-60 0-90M524 386q-80 20-60 60q40 30 120 58q20-10 16-20M480 346q-60 30-70 80M400 328q-40 40-20 100M318 360q10 50 60 70M288 400q20 40 80 50M272 464l92 6M336 540q10 50 20 70l30-6l40-4l22-32M344 544l40 60M382 516l66 30q10 20-20 20M390 430l-4 10M410 430l-4 14M430 428l-6 14M580 504q60 30 160 20q60-10 110-60q50-30 110-42q50-2 44-30" />
      <path d="M754 366q-20-50 60-104M896 256q50 30 60 80M752 370q0-20 200-32q30 10 18 34q-20 8-200 36q-30-10-18-38zM796 230q10-20 24-4q20-20 26 0q30-4 14 16q20 20-4 24q-8 20-22 4q-20 20-26 0q-24-4-10-20q-20-4-2-20z" />
      <path d="M112 436q-20 0-24 24l-40 100q0 14 18 14q-10 30-30 50q0 14 16 14l-26 56q0 14 22 14q20 0 28-14q14 20 30 0q20 16 30-4q20 14 30-4q20 14 40-4q30 0 30-16q40 20 74 10q-10-30-50-60q20 0 16-16l-54-46q20-14 6-18q-30-50-80-90q-16-20-36-10zM86 560q20 30 30 0M138 624q20 40 42 10q20 20 28-6M138 700l6 64l68-12l-24-60M410 676q10-30 80-14q100 40 98 100q-10 20-20 16q-40-10-80-46l-78-56zM430 720l80 20M440 710l76 50M450 734l-80 50q-20 20 20 50q30 20 60-12q20-30 40-66" />
      <path d="M1120 732q-160-60-360-160q-80-30-120 20q-30 70 30 96q200 60 400 166q20 14 50 14M764 690l26-46q30-20 50 6l-30 50q-30 10-46-10zM780 668l40 10M790 648l34 14M1012 790l26-40q30-20 50 6l-30 46q-30 10-46-12zM1030 766l40 10M954 464l30-6l16 60l-30 6zM992 470q30-50 130-48M1000 510q50-20 60 30l60-14M1066 546l34 100l24-2" />
      <path d="M0 846q100-60 160-30q50 40 0 140q-40 50-90 80q-30 20-70 0M0 988l64 42" />
      <ellipse cx="89" cy="883" rx="49" ry="39" />
      <ellipse cx="89" cy="883" rx="28" ry="22" />
      <path d="M266 910q-10 60 50 62q60-10 66-60q-10-30-20-22q20-40-2-44l-18 40q-10-50-36-40q-10 10 0 40q-20 0-20 16q-20-4-20 8zM276 966q0 100 60 130q20 8 36 4M362 966q20 30 20 60M382 1006q60-6 108 4M440 1012q-50 40-80 116q-100-60-180-54q-40 10-86 88q-60-30-88-10q-10 60 100 98q60-10 110-72l50 20q20-60 90-54q100 20 160 78M132 1122q60 14 74 60M10 1170q80 20 100 80M260 1190q-8 60 22 170q-50 20-44 50q20 40 100 16q60-20 60-60l0-96q0-60-26-60M268 1300q60 20 130-6M398 1270q80 30 140 10q50-30 80-114M598 1146q40 40 120 38q80-10 130-50M606 1046q120 80 226 0M832 1046l-14-128l140-8l-40 34l40 30l-124 10" />
      <ellipse cx="573" cy="964" rx="103" ry="84" />
      <path d="M470 970q20-80 80-80q80 0 90 60q0 60-80 62q-60-10-80-24M590 924q20 10 24 34M404 1070q20-30 50-24l60 10q30 20 10 60q-20 10-40 6l-70-20q-20-10-10-32z" />
      <ellipse cx="858" cy="1094" rx="40" ry="38" />
      <path d="M818 1200l56 4l-8-48l34 30l40-30l0 46l56-6l-40 32l40 28l-54 0l6 44l-40-30l-32 32l-6-46l-52 4l38-32zM878 1220l14 20l50-18M610 1300q10-50 60-52q110 10 104 50q-10 70-60 80q-100 20-110-34zM680 1378q10-60 80-44M448 1478q0-30 40-24q20-30 60 0q50 10 38 34q-20 20-40 10q-20 20-44 0q-40 20-54-20z" />
      <path d="M1120 1276q-70-30-140 30q-60 70-120 170q-60 40-140 26q10-50-24-84q-10 30-20 60q-10 20-30 40q-20 20-26 26q50 10 86-32q100 40 160 40q80 0 112-70q10-10 0-30M974 1470q-10 60 0 98M1120 1276q-60 40-94 120q10 60-10 172M1124 1400q-40 60-94 120M1060 1500l66 38q10-60-30-80" />
      <path d="M0 1366q60-6 100 30q80 60 50 150l-40 22M0 1410l70-20M20 1380q60 60 78 188M0 1490l66-30M90 1450l60-20M90 1520l60-22M0 1270l50 0q-30 30-2 62l-48-10M362 1520l170 48M362 1520l-8 48M206 1548l60 20M1120 930q-70 60-40 130l40 10M1080 1060l-74 50q60 30 116-6" />
      <Sparkle x={1048} y={275} />
      <Dots items={[[199, 248, 29], [372, 260, 29], [167, 371, 39], [210, 463, 17], [600, 278, 39], [692, 239, 17], [683, 338, 17], [785, 451, 17], [532, 547, 17], [862, 550, 29], [975, 607, 17], [285, 737, 17], [722, 778, 29], [857, 796, 17], [693, 864, 17], [799, 870, 17], [1027, 901, 29], [437, 899, 17], [745, 999, 17], [173, 988, 17], [953, 1041, 17], [1075, 1176, 17], [173, 1310, 39], [498, 1361, 29], [856, 1370, 29], [183, 1401, 17], [385, 1443, 17], [815, 1443, 17], [235, 1497, 17], [888, 472, 24]]} />
    </g>

    <g transform="translate(0 1847) scale(0.7462 0.3333)">
      <path d="M92 100l0-62l50 60l16-94l76 100M158 4l80 30M280 36q60-10 80-36M380 30q40 40 66-30M435 0q-2 90 10 96M490 104q40-80 90 0M610 60q0-36 20-30q10-50 34-20q20 50-10 60q-44 40-44-10M728 78l20-60l24 0l12 60M754 50l30 0M800 0l20 80l16-10l-14-60M740 10l90-6" />
      <rect x="872" y="-40" width="134" height="150" rx="30" transform="rotate(4 939 35)" />
      <path d="M890 98l96 22l-2 16l-94-22zM1042 160q10-60 48-72q70 60 90 260l-52 90q-80-120-86-278zM1130 430l46-84l34 70l-12 24l-20-34l-30 50zM1096 262a14 30 0 1 1 24 10a10 20 0 1 1-16-20M1108 200l0 16M1108 308l0 18M1076 262l8 0M1134 262l8 0M1086 220l6 14M1126 220l-6 14M1086 306l6-14" />
      <path d="M1144 110q30-60 60-10q60 40 80 130q-10 60-30 0q-20-30-50-50q-40-10-30-70M1170 110q20-50 30-10q30 20-10 70q-24-20-20-60M1400 140l-120 240q-10 50 10 50l160-260M1410 160l-100 230M1370 200l30 40" />
      <path d="M788 230q10-60 30-50q10 30-10 50q30 20 20 60l-40 0M786 240l20 60M856 340l10-72l34 10l-8 76zM870 264q0-40 16-20q8 20 2 30M1204 310l46-20q10 40-4 88zM940 320q0-20 14-24l66-18q10 0 12 20l8 90q-10 24-20 28l-60 24q-14 0-14-30zM714 470q-10-160 76-156q70 30 66 160M754 440q10-50 20 0M800 440q10-50 20 0M874 476q0-60 10-40l20-18q10 40 10 26q20 0 8 32M700 120q40-20 30 30q20 30 0 60q20 20 10 60q-20 40-24 20" />
      <path d="M1324 474q10-70 50-70q40 20 46 70M1350 440q20-30 50-20M1474 370q10-40 50-30q40-30 50 0M1474 370q0 120 30 100M1500 420l4 10M1530 420l4 10M1480 350q60 40 94-10M1500 470l20-30l20 30l20-30M100 472q30-60 40 0M200 474q20-40 40 0M300 474q20-30 40 0M400 474q30-50 50 0" />
      <path d="M30 280q10-60 24-60q20 60-10 120M0 340q30-40 60 0M10 400l0 10M36 400l0 10M0 470l16-30l20 36l20-36" />
      <path d="M940 160q0 34 18 46q-16 10-18 46q-4-34-22-44q18-10 22-48z" />
      <path d="M0 90q50-10 60-90" />
      {[[249, 50, 7], [55, 130, 7], [1046, 22, 12], [1125, 48, 7], [1205, 40, 28], [1249, 36, 18], [1316, 30, 7], [773, 138, 7], [847, 128, 7], [1001, 193, 7], [1281, 108, 17], [1326, 152, 7], [1366, 98, 12], [1196, 250, 7], [1402, 364, 8], [1436, 374, 13], [1051, 457, 8]].map(([x, y, r]) => (
        <ellipse key={x} cx={x} cy={y} rx={r} ry={r * 2.24} />
      ))}
    </g>
  </>
);

const BubbleTail = ({ mine }) => (
  <Tail $mine={mine} width="54" height="44" viewBox="0 0 54 44" aria-hidden="true">
    <path d="M0 0h37v8c0 17 6 28 17 36-11 1-21-2-28-9C18 42 10 44 0 44z" fill={mine ? "#dafdd5" : "#fff"} />
  </Tail>
);

const Salute = () => {
  const id = useId();
  return (
    <svg width="108" height="103" viewBox="0 0 108 103" role="img" aria-label="Saluting face">
      <defs>
        <linearGradient id={`${id}face`} x1="0.6" y1="0" x2="0.4" y2="1">
          <stop offset="0" stopColor="#fffbc0" />
          <stop offset="0.3" stopColor="#fff04a" />
          <stop offset="0.6" stopColor="#ffc921" />
          <stop offset="1" stopColor="#ff9c0c" />
        </linearGradient>
        <linearGradient id={`${id}arm`} x1="0" y1="0" x2="0.3" y2="1">
          <stop offset="0" stopColor="#ffcf4e" />
          <stop offset="0.6" stopColor="#efa01f" />
          <stop offset="1" stopColor="#c67d10" />
        </linearGradient>
        <radialGradient id={`${id}shade`}>
          <stop offset="0" stopColor="#b3602a" stopOpacity="0.65" />
          <stop offset="1" stopColor="#e08a20" stopOpacity="0" />
        </radialGradient>
      </defs>
      <circle cx="102" cy="52" r="51" fill={`url(#${id}face)`} stroke="#e5a019" strokeWidth="1" />
      <ellipse cx="65" cy="34" rx="15" ry="11" fill={`url(#${id}shade)`} />
      <ellipse cx="86" cy="42" rx="6" ry="9" fill="#6d4205" />
      <ellipse cx="85" cy="42" rx="3" ry="6" fill="#8d5a0a" />
      <rect x="91" y="69" width="24" height="6" rx="3" fill="#613606" />
      <path
        d="M2 44c4-9 17-12 27-15 8-3 19-8 29-9 5-1 10 1 10 6-1 5-9 6-16 8-6 3-9 6-14 9-4 5-7 9-12 13-8 6-22 6-25 0-2-3-1-8 1-12z"
        fill={`url(#${id}arm)`}
        stroke="#c98612"
        strokeWidth="1"
      />
      <path d="M31 39c2-4 6-3 9-6s6-2 10-4 8-3 13-4" fill="none" stroke="#d98f17" strokeWidth="1.5" />
      <path d="M8 44c7-6 16-6 24-10 8-4 16-7 24-10" fill="none" stroke="#ffe08a" strokeWidth="2" opacity="0.6" />
    </svg>
  );
};

const Checks = () => (
  <svg width="55" height="36" viewBox="0 0 55 36" role="img" aria-label="Delivered">
    <g fill="none" stroke="#566b53" strokeWidth="5" strokeLinecap="round" strokeLinejoin="round">
      <path d="M3 23l9 9L36 3" />
      <path d="M24 29l4 3L52 3" />
    </g>
  </svg>
);

const TrackingCard = () => (
  <Card>
    <CardTop>
      <ParcelNumber>3698L251768301000931503</ParcelNumber>
      <Estimate>
        <EstimateLabel>Expected Today</EstimateLabel>
        <EstimateTime>12.55pm–2.55pm</EstimateTime>
      </Estimate>
    </CardTop>
    <CardHead>
      <CardTitle>Tracking</CardTitle>
      <Tabs>
        <Tab>Overview</Tab>
        <SelectedTab $selected>Journey</SelectedTab>
      </Tabs>
    </CardHead>
    <Journey>
      {stages.map((stage, index) => (
        <Stage key={stage.title}>
          <Rail $first={index === 0} $top={stage.railTop}>
            {stage.current ? (
              <ArrowDot>
                <svg width="19" height="20" viewBox="0 0 19 20" fill="none" stroke="#fff" strokeWidth="2.6" strokeLinecap="round" strokeLinejoin="round">
                  <path d="M9.500 2v15M2.500 11l7 7 7-7" />
                </svg>
              </ArrowDot>
            ) : (
              <Dot />
            )}
          </Rail>
          <StageBody $top={stage.top} $current={stage.current}>
            <StageTitle $current={stage.current}>{stage.title}</StageTitle>
            {stage.scans.map((scan) => (
              <Scan key={scan.what}>
                {scan.what}
                <ScanPlace>
                  {scan.blank && <Blank />}
                  {scan.faded && <Faded>{scan.faded}</Faded>}
                  {scan.where}
                </ScanPlace>
              </Scan>
            ))}
          </StageBody>
        </Stage>
      ))}
    </Journey>
    <RailEnd />
  </Card>
);

const App = () => (
  <Page>
    <GlobalStyle />
    <Header>
      <StatusBar>
        <Clock>11:29</Clock>
        <StatusIcons>
          <svg width="59" height="38" viewBox="0 0 59 38" aria-hidden="true">
            <rect x="0" y="24" width="10" height="13" rx="4" />
            <rect x="16" y="17" width="10" height="20" rx="4" />
            <rect x="32" y="9" width="10" height="28" rx="4" />
            <rect x="48" y="0" width="10" height="37" rx="4" />
          </svg>
          <svg width="50" height="38" viewBox="0 0 50 38" aria-hidden="true">
            <path d="M25 0c9.500 0 18 3.700 24.300 9.800.6.600.6 1.500 0 2.100l-4 4c-.6.600-1.500.600-2.100 0C38.400 11.300 32 8.500 25 8.500S11.600 11.300 6.800 15.900c-.6.600-1.500.600-2.100 0l-4-4c-.6-.6-.6-1.500 0-2.100C7 3.700 15.500 0 25 0z" />
            <path d="M25 13c6 0 11.400 2.300 15.500 6.100.6.600.6 1.500 0 2.100l-4.100 4.100c-.5.500-1.400.5-2 0-2.500-2.300-5.800-3.700-9.400-3.700s-6.900 1.400-9.400 3.700c-.6.500-1.500.5-2 0l-4.100-4.100c-.6-.6-.6-1.500 0-2.100C13.600 15.300 19 13 25 13z" />
            <path d="M25 26c2.500 0 4.800.9 6.600 2.400.6.600.6 1.500.1 2.100l-5.600 6c-.6.700-1.600.7-2.200 0l-5.600-6c-.5-.6-.5-1.500.1-2.100C20.200 26.900 22.500 26 25 26z" />
          </svg>
          <Battery>
            <BatteryBody>57</BatteryBody>
            <BatteryCap />
          </Battery>
        </StatusIcons>
      </StatusBar>
      <NavBar>
        <BackButton aria-label="Back, 11 unread chats">
          <svg width="42" height="68" viewBox="0 0 42 68" fill="none" stroke="#000" strokeWidth="8" strokeLinecap="round" strokeLinejoin="round">
            <path d="M36 5L6 34l30 29" />
          </svg>
          11
        </BackButton>
        <Avatar>
          <svg width="36" height="38" viewBox="0 0 36 38" fill="#0063cc" aria-hidden="true">
            <circle cx="18" cy="10" r="9" />
            <path d="M1 36v-4c0-6 8-10 17-10s17 4 17 10v4z" />
          </svg>
        </Avatar>
        <Contact>
          61
          <svg width="280" height="82" viewBox="0 0 280 82" aria-hidden="true">
            <defs>
              <filter id="marker" x="-10%" y="-20%" width="120%" height="140%">
                <feGaussianBlur stdDeviation="2.200" />
              </filter>
              <clipPath id="markerEdge">
                <rect width="163" height="55" />
              </clipPath>
            </defs>
            <g clipPath="url(#markerEdge)">
              <path d="M0 30q2-18 14-17q20 6 40 6q40 2 64 0Q118 2 140 2q24 2 28 20v44H16Q0 50 0 30z" filter="url(#marker)" />
            </g>
            <g fill="none" stroke="#c9cac4" strokeWidth="3" strokeLinecap="round">
              <path d="M138 57q6 5 12 0M160 56q6 5 11-1" stroke="#b9bab4" />
              <path d="M228 26q10-4 12 4M254 26l8 2M266 25l0 5M262 57q8 0 10-5" opacity="0.5" />
            </g>
          </svg>
        </Contact>
        <NavActions>
          <button aria-label="Video call">
            <svg width="91" height="64" viewBox="0 0 91 64" fill="none" stroke="#000" strokeWidth="5" strokeLinejoin="round">
              <rect x="3" y="3" width="63" height="58" rx="13" />
              <path d="M66 26l19-15q3-2 3 2v38q0 4-3 2L66 38" />
            </svg>
          </button>
          <button aria-label="Voice call">
            <svg width="73" height="72" viewBox="0 0 73 72" fill="none" stroke="#000" strokeWidth="5" strokeLinejoin="round">
              <path d="M12 3c5-2 8 1 10 5l6 11c2 4 1 7-2 10-3 3-4 4-2 8 4 7 11 14 18 18 4 2 5 1 8-2 3-3 6-4 10-2l9 6c3 3 3 6 0 9-6 6-14 5-24 0C25 57 9 43 4 27 1 17 4 7 12 3z" />
            </svg>
          </button>
        </NavActions>
      </NavBar>
    </Header>

    <Chat>
      <Wallpaper aria-hidden="true">
        <Doodles />
        <DoodleLabels />
        <CalendarDay />
        <g transform="translate(1121 1)">
          <Doodles />
          <CalendarDay />
        </g>
      </Wallpaper>
      <Messages>
        <Row>
          <TextBubble>
            <BubbleTail />
            <ShortText>Awesome thank you</ShortText>
            <Meta>15:51</Meta>
          </TextBubble>
        </Row>
        <Row $mine>
          <EmojiBubble $mine>
            <BubbleTail mine />
            <Emojis>
              <Salute />
              <Salute />
            </Emojis>
            <Meta $mine>
              15:52
              <Checks />
            </Meta>
          </EmojiBubble>
        </Row>
        <DatePill>6月23日 周二</DatePill>
        <Row $mine>
          <ForwardButton aria-label="Forward">
            <svg width="46" height="42" viewBox="0 0 46 42" fill="#f3f3f2">
              <path d="M23 3c0-3 2-3 4-1l18 17c1 1 1 2 0 3L27 40c-2 2-4 2-4-1v-9C13 29 9 32 5 39c-1 3-5 2-5-1C0 23 9 13 23 12z" />
            </svg>
          </ForwardButton>
          <MediaBubble $mine>
            <BubbleTail mine />
            <TrackingCard />
            <Caption>
              <Text>Friend, The package is on its way. Pls keep phone on.</Text>
              <CaptionMeta $mine>
                10:01
                <Checks />
              </CaptionMeta>
            </Caption>
          </MediaBubble>
        </Row>
        <Row>
          <TextBubble>
            <BubbleTail />
            <ShortText>Thank you</ShortText>
            <Meta>11:24</Meta>
          </TextBubble>
        </Row>
      </Messages>
      <ScrollButton aria-label="Scroll to latest">
        <svg width="40" height="24" viewBox="0 0 40 24" fill="none" stroke="#000" strokeWidth="6" strokeLinecap="round" strokeLinejoin="round">
          <path d="M4 4l16 16L36 4" />
        </svg>
      </ScrollButton>
    </Chat>

    <Composer>
      <ComposerButton $gap={40} aria-label="Attach">
        <svg width="61" height="61" viewBox="0 0 61 61" fill="none" stroke="#000" strokeWidth="5" strokeLinecap="round">
          <path d="M30.500 3v55M3 30.500h55" />
        </svg>
      </ComposerButton>
      <Field>
        <Input aria-label="Message" />
        <button aria-label="Stickers">
          <svg width="56" height="56" viewBox="0 0 56 56" fill="none" stroke="#000" strokeWidth="4" strokeLinejoin="round">
            <path d="M21 3h14q19 0 19 19v7q0 4-3 7L35 51q-3 3-7 3h-7Q3 54 3 36V21Q3 3 21 3z" />
            <path d="M54 30q-2 2-7 2-16 0-16 13 0 6-2 9" />
          </svg>
        </button>
      </Field>
      <ComposerButton $gap={57} aria-label="Camera">
        <svg width="72" height="58" viewBox="0 0 72 58" fill="none" stroke="#000" strokeWidth="5" strokeLinejoin="round">
          <path d="M10 9h9q3 0 5-3 2-3 6-3h12q4 0 6 3 2 3 5 3h9q7 0 7 7v32q0 7-7 7H10q-7 0-7-7V16q0-7 7-7z" />
          <circle cx="36" cy="31" r="14" />
          <circle cx="56" cy="20" r="3.500" fill="#000" stroke="none" />
        </svg>
      </ComposerButton>
      <ComposerButton aria-label="Record voice message">
        <svg width="50" height="70" viewBox="0 0 50 70" fill="none" stroke="#000" strokeWidth="4.500" strokeLinecap="round">
          <rect x="14" y="3" width="22" height="44" rx="11" />
          <path d="M3 35q0 22 22 22t22-22M25 57v10" />
        </svg>
      </ComposerButton>
    </Composer>
  </Page>
);

export default App;
